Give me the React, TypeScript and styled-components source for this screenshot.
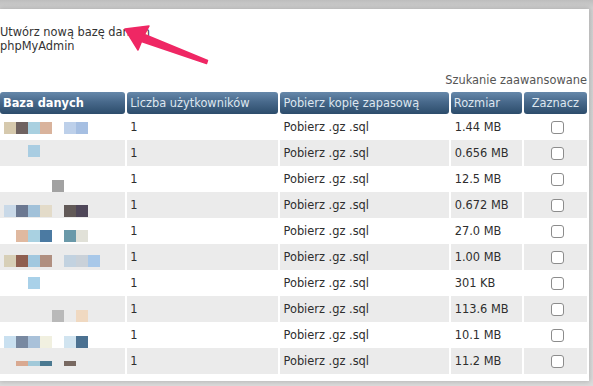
import React from "react";
import styled, { createGlobalStyle } from "styled-components";

const GlobalStyle = createGlobalStyle`
  html, body { margin: 0; padding: 0; }
  body {
    width: 593px;
    height: 386px;
    overflow: hidden;
    background: linear-gradient(to bottom, #bdbdbd 0px, #d2d2d2 8px, #dcdcdc 100%);
    font-family: "DejaVu Sans", Verdana, sans-serif;
  }
`;

const Panel = styled.div`
  position: relative;
  margin: 9px 4px 0 0;
  width: 589px;
  height: 372px;
  background: #ffffff;
  box-shadow: 0 0 5px 1px rgba(0, 0, 0, 0.18);
  display: flex;
  flex-direction: column;
`;

const Intro = styled.div`
  padding: 16px 0 0 0;
  font-size: 11.4px;
  line-height: 14px;
  color: #333333;
`;

const SearchLink = styled.div`
  margin-top: 20px;
  padding-right: 2px;
  text-align: right;
  font-size: 11.4px;
  line-height: 14px;
  color: #555555;
`;

const Table = styled.table`
  margin-top: 5px;
  border-collapse: separate;
  border-spacing: 2px 0;
  margin-left: -2px;
  table-layout: fixed;
  font-size: 11.4px;
  color: #2e2e2e;
`;

const Th = styled.th<{ $w: number; $center?: boolean; $bold?: boolean }>`
  width: ${(p) => p.$w}px;
  height: 22px;
  padding: 0 0 0 ${(p) => (p.$center ? 0 : 3)}px;
  text-align: ${(p) => (p.$center ? "center" : "left")};
  font-weight: ${(p) => (p.$bold ? "bold" : "normal")};
  color: ${(p) => (p.$bold ? "#ffffff" : "#dde6ef")};
  background: linear-gradient(to bottom, #6688aa 0%, #48698b 45%, #2c4c6b 100%);
  border-radius: 3px;
  box-sizing: border-box;
  white-space: nowrap;
`;

const Tr = styled.tr<{ $alt: boolean }>`
  background: ${(p) => (p.$alt ? "#ebebeb" : "#ffffff")};
`;

const Td = styled.td<{ $center?: boolean; $pad?: number }>`
  height: 26px;
  padding: 0 0 0 ${(p) => (p.$pad ?? 3)}px;
  text-align: ${(p) => (p.$center ? "center" : "left")};
  vertical-align: middle;
  white-space: nowrap;
  box-sizing: border-box;
`;

const NameTd = styled.td`
  height: 26px;
  padding: 0;
  vertical-align: top;
  box-sizing: border-box;
`;

const Swatches = styled.div<{ $top: number }>`
  display: flex;
  height: 26px;
  box-sizing: border-box;
  overflow: hidden;
  padding: ${(p) => p.$top}px 0 0 4px;
  filter: blur(0.5px);
`;

const Swatch = styled.span<{ $c: string; $h: number }>`
  display: block;
  flex: none;
  width: 12px;
  height: ${(p) => p.$h}px;
  background: ${(p) => p.$c || "transparent"};
`;

const Check = styled.span`
  display: inline-block;
  width: 11px;
  height: 11px;
  margin-left: 2px;
  border: 1px solid #8c8c8c;
  border-radius: 3px;
  background: #ffffff;
  vertical-align: middle;
`;

const ArrowLayer = styled.svg`
  position: absolute;
  left: 0;
  top: -9px;
  pointer-events: none;
`;

type Row = { size: string; top: number; h?: number; blocks: string[] };

const rows: Row[] = [
  { size: "1.44 MB", top: 8, blocks: ["#d6c9ad", "#6f6260", "#a9d0e0", "#d9b39c", "", "#bdd0ea", "#a6bfe2"] },
  { size: "0.656 MB", top: 5, blocks: ["", "", "#a9cde2"] },
  { size: "12.5 MB", top: 14, blocks: ["", "", "", "", "#a2a2a2"] },
  { size: "0.672 MB", top: 13, blocks: ["#c9d9e8", "#6b7891", "#a1c1d9", "#e3dbc9", "", "#625a58", "#4f4759"] },
  { size: "27.0 MB", top: 12, blocks: ["", "#e0b9a0", "#a9d1e1", "#4b7aa2", "", "#6a99a9", "#e1e1d8"] },
  { size: "1.00 MB", top: 11, blocks: ["#d7cfb7", "#8f5f50", "#a2c8df", "#b08f80", "", "#c2d2e0", "#c9d1d9", "#a8c8e9"] },
  { size: "301 KB", top: 7, blocks: ["", "", "#a9d1e9"] },
  { size: "113.6 MB", top: 14, blocks: ["", "", "", "", "#b9b9b9", "", "#f0d9c1"] },
  { size: "10.1 MB", top: 14, blocks: ["#c9e0f0", "#7889a1", "#a9c1d9", "#f1f0e0", "", "#d1e4f0", "#4b7191"] },
  { size: "11.2 MB", top: 13, h: 5, blocks: ["", "#d9a991", "#a1c9d9", "#4b7991", "", "#786961"] },
];

export default function App() {
  return (
    <>
      <GlobalStyle />
      <Panel>
        <Intro>
          <div>Utwórz nową bazę danych</div>
          <div>phpMyAdmin</div>
        </Intro>
        <SearchLink>Szukanie zaawansowane</SearchLink>
        <Table>
          <thead>
            <tr>
              <Th $w={125} $bold>Baza danych</Th>
              <Th $w={151}>Liczba użytkowników</Th>
              <Th $w={168}>Pobierz kopię zapasową</Th>
              <Th $w={71}>Rozmiar</Th>
              <Th $w={63} $center>Zaznacz</Th>
            </tr>
          </thead>
          <tbody>
            {rows.map((r, i) => (
              <Tr key={i} $alt={i % 2 === 1}>
                <NameTd>
                  <Swatches $top={r.top}>
                    {r.blocks.map((c, j) => (
                      <Swatch key={j} $c={c} $h={r.h ?? 12} />
                    ))}
                  </Swatches>
                </NameTd>
                <Td>1</Td>
                <Td>Pobierz .gz .sql</Td>
                <Td $pad={4}>{r.size}</Td>
                <Td $center>
                  <Check />
                </Td>
              </Tr>
            ))}
          </tbody>
        </Table>
        <ArrowLayer width="240" height="80" viewBox="0 0 240 80">
          <polygon
            points="125,29 149,26 144.5,34.5 207.5,60.5 206.5,63.5 141.5,41.5 138,50"
            fill="#ef2764"
            stroke="#ef2764"
            strokeWidth="1.5"
            strokeLinejoin="round"
          />
        </ArrowLayer>
      </Panel>
    </>
  );
}
